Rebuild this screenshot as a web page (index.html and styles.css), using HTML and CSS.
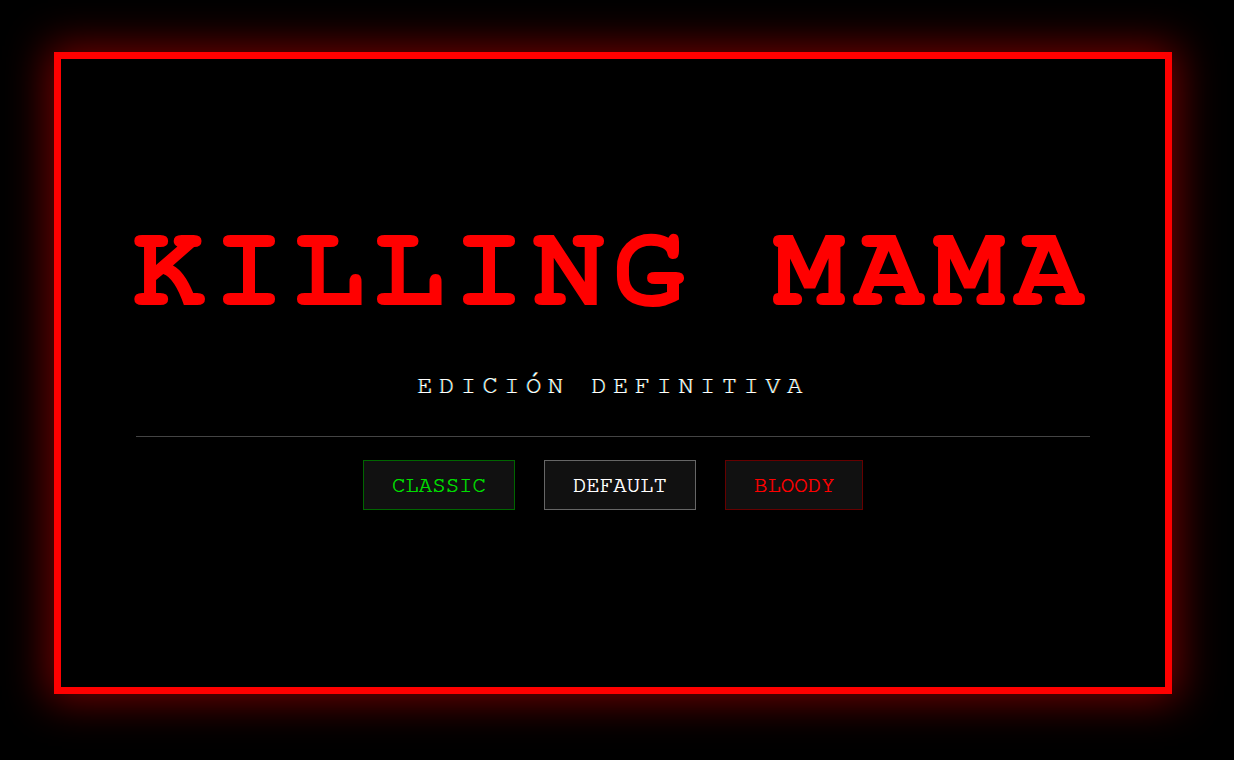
FILE: index.html
```html
<!DOCTYPE html>
<html lang="es">
<head>
  <meta charset="UTF-8" />
  <title>Killing Mama - Edición Definitiva</title>
  <link rel="stylesheet" href="styles.css">
</head>
<body>
  <div class="frame">
    <h1 class="title">KILLING MAMA</h1>
    <p class="subtitle">EDICIÓN DEFINITIVA</p>
    <hr class="divider">
    <div class="themes">
      <button class="btn btn-classic">CLASSIC</button>
      <button class="btn btn-default">DEFAULT</button>
      <button class="btn btn-bloody">BLOODY</button>
    </div>
  </div>
</body>
</html>
```

FILE: styles.css
```css
html, body {
  min-height: 100%;
}
body {
  margin: 0;
  padding: 52px 0 66px 54px;
  background-color: #000;
  font-family: FreeMono, "Courier New", monospace;
  color: #fff;
}
.frame {
  box-sizing: border-box;
  width: 1118px;
  height: 642px;
  border: 7px solid #f00;
  box-shadow: 0 0 40px 6px rgba(255, 0, 0, 0.45);
  padding: 0 75px 40px;
  display: flex;
  flex-direction: column;
  align-items: center;
  justify-content: center;
}
.title {
  margin: 0;
  font-size: 120px;
  font-weight: bold;
  letter-spacing: 8px;
  white-space: nowrap;
  color: #f00;
  line-height: 1.2;
}
.subtitle {
  margin: 32px 0 0;
  font-size: 1.6rem;
  letter-spacing: 0.25em;
  color: #fff;
  text-shadow: -0.6px 0 rgba(0, 200, 255, 0.6), 0.6px 0 rgba(255, 140, 0, 0.6);
}
.divider {
  width: 100%;
  border: none;
  border-top: 1px solid #444;
  margin: 38px 0 23px;
}
.themes {
  display: flex;
  gap: 29px;
}
.btn {
  font-family: FreeMono, "Courier New", monospace;
  font-size: 1.4rem;
  line-height: 24px;
  background-color: #111;
  padding: 12px 28px;
  cursor: pointer;
  border: 1px solid #666;
  color: #fff;
  text-shadow: 0.5px 0 currentColor;
}
.btn-classic {
  color: #0d0;
  border-color: #060;
}
.btn-bloody {
  color: #f00;
  border-color: #600;
}
```
